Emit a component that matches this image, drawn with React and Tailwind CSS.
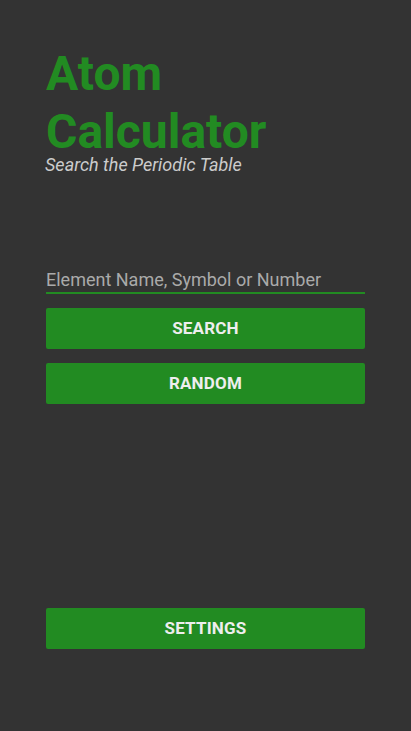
import React, { useState } from 'react';

const Btn = ({ children, className = '' }) => (
  <button className={`w-full h-[41px] rounded-[2px] bg-[#228b22] text-[#eeeeee] text-[17px] font-bold tracking-[0.2px] uppercase ${className}`}>
    {children}
  </button>
);

export default function App() {
  const [query, setQuery] = useState('');

  return (
    <div className="w-full h-[731px] bg-[#333333] px-[46px] flex flex-col" style={{ fontFamily: 'Roboto, sans-serif' }}>
      <h1 className="mt-[45px] text-[48px] leading-[57.6px] font-bold text-[#228b22]">
        Atom<br />Calculator
      </h1>
      <p className="-mt-[6px] -ml-[1px] text-[18px] leading-[21px] italic text-[#cccccc]">Search the Periodic Table</p>

      <input
        value={query}
        onChange={(e) => setQuery(e.target.value)}
        placeholder="Element Name, Symbol or Number"
        className="mt-[91px] w-full h-[28px] bg-transparent border-b-2 border-[#228b22] text-[18px] text-[#dddddd] placeholder:text-[#aaaaaa] outline-none"
      />
      <Btn className="mt-[14px]">Search</Btn>
      <Btn className="mt-[14px]">Random</Btn>

      <div className="flex-1" />
      <Btn className="mb-[82px]">Settings</Btn>
    </div>
  );
}
